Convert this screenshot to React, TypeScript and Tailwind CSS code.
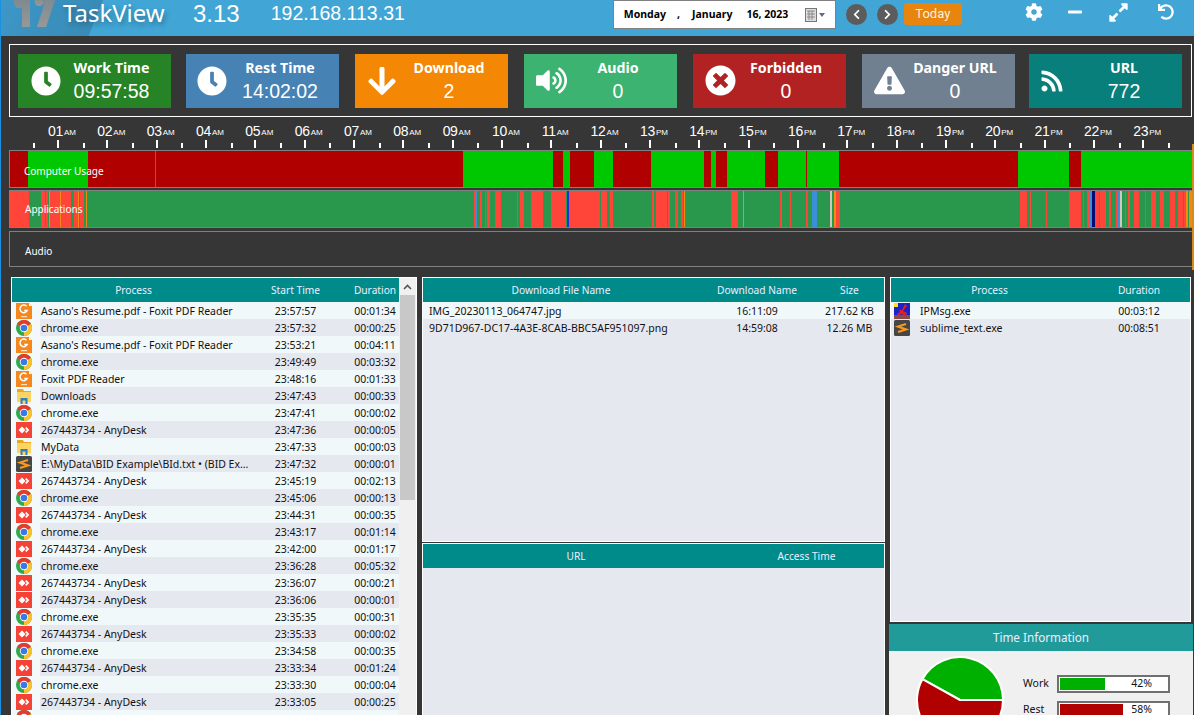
import React from "react";
import {
  FaClock, FaArrowDown, FaVolumeUp, FaTimesCircle, FaExclamationTriangle, FaRss,
  FaCog, FaMinus, FaExpandAlt, FaUndo, FaChevronLeft, FaChevronRight,
} from "react-icons/fa";

const R = "#ff4539", G = "#2a984c", O = "#f08a10", B = "#3a8fd8", N = "#0a0a70", L = "#d0c8c0", U = "#2030e0";
const D = "#b00000", A = "#00c800";

function toSegs(start: number, stops: [number, string][]) {
  let p = start;
  return stops.map(([e, c]) => {
    const s = { w: e - p, c };
    p = e;
    return s;
  });
}

const usage = toSegs(10, [[28, D], [88, A], [155, D], [156, "#4a8a20"], [463, D], [553, A], [563, D], [570, A], [594, D], [613, A], [651, D], [704, A], [711, D], [716, A], [727, D], [765, A], [778, D], [806, A], [807, D], [839, A], [1018, D], [1069, A], [1081, D], [1192, A]]);

const apps = toSegs(10, [[29, R], [41, G], [45, R], [46, G], [48, R], [49, G], [50, O], [52, R], [60, R], [60.5, O], [71, R], [74, G], [78, R], [79, O], [80, G], [84, R], [86, G], [87, O], [474, G], [475, R], [477, B], [480, G], [482, R], [485, G], [486, R], [487, G], [490, R], [491, G], [495, G], [501, R], [503, G], [517, G], [518, R], [520, G], [524, R], [531, G], [543, R], [551, G], [566, R], [567, G], [569, U], [600, R], [601, G], [607, R], [608, G], [610, G], [613, R], [652, G], [654, R], [656, G], [659, R], [667, R], [668, G], [670, R], [675, G], [678, R], [681, G], [683, R], [683.5, G], [685, O], [686, G], [731, G], [738, R], [743, G], [744, O], [780, G], [782, R], [790, G], [791, R], [806, G], [808, R], [812, G], [817, B], [830, G], [832, L], [834, G], [836, O], [840, R], [1020, G], [1027, R], [1030, G], [1031, R], [1046, G], [1047, R], [1069, G], [1081, R], [1083, G], [1084, R], [1087, G], [1090, R], [1092, B], [1095, N], [1099, R], [1100, G], [1106, R], [1109, G], [1111, R], [1116, G], [1118, R], [1120, B], [1122, L], [1125, G], [1126, R], [1128, G], [1130, R], [1134, G], [1139, R], [1140, G], [1145, G], [1146, R], [1151, G], [1156, R], [1160, G], [1164, R], [1170, G], [1175, R], [1178, G], [1183, R], [1184, G], [1186, R], [1188, O], [1189, G], [1192, O]]);

type Kind = "foxit" | "chrome" | "any" | "folder" | "sublime" | "ip";

const rows: [Kind, string, string, string][] = [
  ["foxit", "Asano's Resume.pdf - Foxit PDF Reader", "23:57:57", "00:01:34"],
  ["chrome", "chrome.exe", "23:57:32", "00:00:25"],
  ["foxit", "Asano's Resume.pdf - Foxit PDF Reader", "23:53:21", "00:04:11"],
  ["chrome", "chrome.exe", "23:49:49", "00:03:32"],
  ["foxit", "Foxit PDF Reader", "23:48:16", "00:01:33"],
  ["folder", "Downloads", "23:47:43", "00:00:33"],
  ["chrome", "chrome.exe", "23:47:41", "00:00:02"],
  ["any", "267443734 - AnyDesk", "23:47:36", "00:00:05"],
  ["folder", "MyData", "23:47:33", "00:00:03"],
  ["sublime", "E:\\MyData\\BID Example\\BId.txt • (BID Ex…", "23:47:32", "00:00:01"],
  ["any", "267443734 - AnyDesk", "23:45:19", "00:02:13"],
  ["chrome", "chrome.exe", "23:45:06", "00:00:13"],
  ["any", "267443734 - AnyDesk", "23:44:31", "00:00:35"],
  ["chrome", "chrome.exe", "23:43:17", "00:01:14"],
  ["any", "267443734 - AnyDesk", "23:42:00", "00:01:17"],
  ["chrome", "chrome.exe", "23:36:28", "00:05:32"],
  ["any", "267443734 - AnyDesk", "23:36:07", "00:00:21"],
  ["any", "267443734 - AnyDesk", "23:36:06", "00:00:01"],
  ["chrome", "chrome.exe", "23:35:35", "00:00:31"],
  ["any", "267443734 - AnyDesk", "23:35:33", "00:00:02"],
  ["chrome", "chrome.exe", "23:34:58", "00:00:35"],
  ["any", "267443734 - AnyDesk", "23:33:34", "00:01:24"],
  ["chrome", "chrome.exe", "23:33:30", "00:00:04"],
  ["any", "267443734 - AnyDesk", "23:33:05", "00:00:25"],
];

function RowIcon({ kind }: { kind: Kind }) {
  if (kind === "chrome")
    return (
      <svg width="16" height="16" viewBox="0 0 16 16">
        <circle cx="8" cy="8" r="8" fill="#2fa84f" />
        <path d="M8 8 L1.07 4 A8 8 0 0 1 14.93 4 Z" fill="#e33b2e" />
        <path d="M8 8 L14.93 4 A8 8 0 0 1 8 16 Z" fill="#fbc02d" />
        <circle cx="8" cy="8" r="4.2" fill="#fff" />
        <circle cx="8" cy="8" r="3.3" fill="#3b78e7" />
      </svg>
    );
  if (kind === "any")
    return (
      <svg width="16" height="16" viewBox="0 0 16 16">
        <rect width="16" height="16" fill="#f44336" />
        <path d="M6 4.5 L9.5 8 L6 11.5 L2.5 8 Z" fill="#fff" />
        <path d="M10.3 5 L13.3 8 L10.3 11 L9.1 9.8 L10.9 8 L9.1 6.2 Z" fill="#fff" />
      </svg>
    );
  if (kind === "foxit")
    return (
      <svg width="16" height="16" viewBox="0 0 16 16">
        <path d="M0 0 H13 L16 3 V16 H0 Z" fill="#f5871f" />
        <path d="M13 0 L16 3 H13 Z" fill="#fff" />
        <path d="M10.5 3.2 A3.8 3.8 0 1 0 11.2 7.5 H8.2" fill="none" stroke="#fff" strokeWidth="1.5" />
        <rect x="5" y="13" width="6" height="1.2" fill="#fde0c0" />
      </svg>
    );
  if (kind === "folder")
    return (
      <svg width="16" height="16" viewBox="0 0 16 16">
        <path d="M1 1 H7 L8 3 H15 V5 H1 Z" fill="#e8a820" />
        <rect x="1" y="4" width="14" height="10" fill="#fcd462" />
        <rect x="1" y="14" width="14" height="2" fill="#fbf3d8" />
        <rect x="4.5" y="10" width="7" height="6" fill="#2f7fc4" />
        <rect x="6.5" y="12.5" width="3" height="3.5" fill="#fcd462" />
      </svg>
    );
  if (kind === "sublime")
    return (
      <svg width="16" height="16" viewBox="0 0 16 16">
        <rect width="16" height="16" rx="1.5" fill="#464646" />
        <path d="M12 4 L4 6.5 L12 9.5 L4 12" fill="none" stroke="#f59a1c" strokeWidth="2.2" />
      </svg>
    );
  return (
    <svg width="16" height="16" viewBox="0 0 16 16">
      <rect width="16" height="16" fill="#1a22c8" />
      <rect y="12" width="16" height="4" fill="#8a4a4a" />
      <rect x="0" y="0" width="4" height="4" fill="#ffe020" />
      <path d="M11 1 L13 3 L9 8 L13 10 L12 13 L7 11 L4 13 L3 11 L6 9 L5 7 L8 7 Z" fill="#e02020" />
    </svg>
  );
}

const cards = [
  { t: "Work Time", v: "09:57:58", c: "bg-[#268426]", I: FaClock, s: 30, m: "", ico: "w-[55px]", txt: "w-[77px]" },
  { t: "Rest Time", v: "14:02:02", c: "bg-[#4682b4]", I: FaClock, s: 30, m: "ml-[15px]", ico: "w-[52px]", txt: "w-[84px]" },
  { t: "Download", v: "2", c: "bg-[#f48703]", I: FaArrowDown, s: 32, m: "ml-[16px]", ico: "w-[54px]", txt: "w-[80px]" },
  { t: "Audio", v: "0", c: "bg-[#3cb371]", I: FaVolumeUp, s: 31, m: "ml-[16px]", ico: "w-[54px]", txt: "w-[80px]" },
  { t: "Forbidden", v: "0", c: "bg-[#b22222]", I: FaTimesCircle, s: 31, m: "ml-[16px]", ico: "w-[54px]", txt: "w-[78px]" },
  { t: "Danger URL", v: "0", c: "bg-[#708090]", I: FaExclamationTriangle, s: 31, m: "ml-[16px]", ico: "w-[54px]", txt: "w-[78px]" },
  { t: "URL", v: "772", c: "bg-[#087f7a]", I: FaRss, s: 24, m: "ml-[14px]", ico: "w-[46px]", txt: "w-[98px]" },
];

const hours = Array.from({ length: 23 }, (_, i) => i + 1);

function Bar({ segs, label, cls, lab }: { segs: { w: number; c: string }[]; label: string; cls: string; lab: string }) {
  return (
    <div className={`relative flex border-y border-[#808080] ${cls}`}>
      {segs.map((s, i) => (
        <div key={i} className="h-full shrink-0" style={{ width: s.w, backgroundColor: s.c }} />
      ))}
      <span className={`absolute text-[10px] leading-[12px] text-white ${lab}`}>{label}</span>
    </div>
  );
}

function Head({ cols, children }: { cols: string; children: React.ReactNode }) {
  return <div className={`grid h-[24px] items-center bg-[#008b8b] pt-[1px] text-center text-[10.2px] text-[#eef] ${cols}`}>{children}</div>;
}

const F = "font-['Noto_Sans',sans-serif]";

export default function App() {
  return (
    <div className={`h-[715px] w-[1194px] overflow-hidden border-l border-[#1a90e0] bg-[#363636] ${F}`}>
      {/* top bar */}
      <header className="flex h-[36px] items-center bg-[#41a5d5] pb-[8px] text-white">
        <div className="flex h-[36px] w-[190px] shrink-0 items-start self-start bg-[linear-gradient(112deg,#3d97c7_0%,#388bb6_49.8%,#41a5d5_50%)] pl-[12px]">
          <svg width="44" height="28" viewBox="0 0 44 28" className="shrink-0">
            <defs>
              <linearGradient id="lg" x1="0" y1="0" x2="0" y2="1">
                <stop offset="0" stopColor="#7f8a90" />
                <stop offset="1" stopColor="#989898" />
              </linearGradient>
            </defs>
            <path d="M0 0 H17 V27 H9 L9 8 L3 8 Z" fill="url(#lg)" />
            <circle cx="26" cy="1.5" r="4.5" fill="url(#lg)" />
            <path d="M31 0 H42 L33 27 H24 L30 8 Z" fill="url(#lg)" />
          </svg>
          <span className="ml-[6px] text-[24px] leading-[26px] text-white [text-shadow:2px_3px_5px_rgba(0,0,0,0.3)]">TaskView</span>
        </div>
        <span className="ml-[2px] font-['Liberation_Sans',sans-serif] text-[24px] leading-none">3.13</span>
        <span className="ml-[31px] font-['Liberation_Sans',sans-serif] text-[19.5px] leading-none">192.168.113.31</span>
        <div className="ml-[208px] flex h-[29px] w-[223px] shrink-0 items-center self-start border border-[#808080] bg-white text-[10.5px] font-bold text-black">
          <span className="ml-[10px]">Monday</span>
          <span className="ml-[11px]">,</span>
          <span className="ml-[12px]">January</span>
          <span className="ml-[14px]">16, 2023</span>
          <svg width="20" height="14" viewBox="0 0 20 14" className="ml-[17px]">
            <rect x="0.5" y="0.5" width="11" height="13" fill="#ddd" stroke="#777" />
            <path d="M2 3H10M2 6H10M2 9H10M4 3V12M7 3V12" stroke="#888" />
            <path d="M14 5H20L17 9Z" fill="#5a6a8a" />
          </svg>
        </div>
        <div className="ml-[10px] flex h-[21px] w-[21px] items-center justify-center rounded-full bg-[#5c5c5c]"><FaChevronLeft size={11} /></div>
        <div className="ml-[10px] flex h-[21px] w-[21px] items-center justify-center rounded-full bg-[#5c5c5c]"><FaChevronRight size={11} /></div>
        <div className="ml-[6px] flex h-[22px] w-[58px] items-center justify-center rounded-[3px] bg-[#e8850f] font-['Roboto',sans-serif] text-[13px] text-[#fdf0dd]">Today</div>
        <FaCog size={18} className="mb-[4px] ml-[63px]" />
        <FaMinus size={16} className="mb-[4px] ml-[24px]" />
        <FaExpandAlt size={21} className="mb-[4px] ml-[25px]" />
        <FaUndo size={16} className="mb-[4px] ml-[29px]" />
      </header>

      {/* counters */}
      <section className="ml-[8px] mt-[8px] flex h-[73px] w-[1183px] items-center border border-white pl-[8px]">
        {cards.map((c) => (
          <div key={c.t} className={`flex h-[54px] w-[153px] shrink-0 items-center text-white ${c.c} ${c.m}`}>
            <div className={`flex shrink-0 justify-center ${c.ico}`}><c.I size={c.s} /></div>
            <div className={`flex shrink-0 flex-col items-center ${c.txt}`}>
              <span className="whitespace-nowrap text-[14.2px] font-bold leading-[20px]">{c.t}</span>
              <span className="font-['Liberation_Sans',sans-serif] text-[19.5px] leading-[26px]">{c.v}</span>
            </div>
          </div>
        ))}
      </section>

      {/* timeline */}
      <section className="relative mt-[1px]">
        <div className="ml-[32.33px] flex h-[32px] pb-[2px] text-white">
          {hours.map((h) => (
            <div key={h} className="flex w-[49.33px] shrink-0 flex-col">
              <div className="flex h-[20px] items-end justify-center pl-[8px] font-['Liberation_Sans',sans-serif] leading-none">
                <span className="text-[14px] tracking-[-0.3px]">{String(h).padStart(2, "0")}</span>
                <span className="ml-[1px] text-[8px] leading-[10px]">{h < 13 ? "AM" : "PM"}</span>
              </div>
              <div className="flex h-[10px] items-end">
                <div className="flex-1"><div className="h-[5px] w-[2px] bg-white" /></div>
                <div className="h-[8px] w-[2px] bg-white" />
                <div className="flex-1" />
              </div>
            </div>
          ))}
          <div className="flex h-[30px] items-end"><div className="h-[5px] w-[2px] bg-white" /></div>
        </div>
        <div className="ml-[8px] flex w-[1184px] flex-col">
          <Bar segs={usage} label="Computer Usage" lab="left-[14px] top-[14px]" cls="mb-[2px] h-[38px] border-l border-l-[#808080]" />
          <Bar segs={apps} label="Applications" lab="left-[15px] top-[12px]" cls="mb-[3px] h-[38px] border-l border-l-[#808080]" />
          <Bar segs={[]} label="Audio" lab="left-[15px] top-[13px]" cls="h-[36px] border-l border-l-[#808080]" />
        </div>
        <div className="absolute right-0 top-[26px] h-[126px] w-[2px] bg-[#d98a1c]" />
      </section>

      {/* tables */}
      <section className="ml-[10px] mt-[10px] flex h-[438px] items-start text-[10.5px] text-[#111]">
        {/* process list */}
        <div className="flex h-[440px] w-[406px] shrink-0 overflow-hidden border border-white bg-[#f0f0f0]">
          <div className="w-[387px] shrink-0">
            <Head cols="grid-cols-[243px_81px_15px_48px]">
              <span>Process</span>
              <span>Start Time</span>
              <span />
              <span>Duration</span>
            </Head>
            {rows.map((r, i) => (
              <div key={i} className="grid h-[17px] grid-cols-[28px_359px] items-center bg-[#f0f8fa]">
                <div className="flex h-[17px] items-center bg-[#f3f9fb] pl-[4px]"><RowIcon kind={r[0]} /></div>
                <div className={`grid h-[17px] grid-cols-[215px_81px_15px_48px] items-center pt-[2px] ${i % 2 ? "bg-[#e6e8f0]" : "bg-[#f0f8fa]"}`}>
                  <span className="whitespace-nowrap pl-[1px]">{r[1]}</span>
                  <span className="text-center">{r[2]}</span>
                  <span />
                  <span className="text-center">{r[3]}</span>
                </div>
              </div>
            ))}
            <div className="grid h-[17px] grid-cols-[28px_359px] items-start bg-[#f0f8fa]">
              <div className="pl-[4px]"><RowIcon kind="chrome" /></div>
            </div>
          </div>
          <div className="flex w-[17px] shrink-0 flex-col bg-[#f0f0f0]">
            <div className="flex h-[17px] items-center justify-center">
              <svg width="9" height="6" viewBox="0 0 9 6"><path d="M1 5 L4.5 1.5 L8 5" fill="none" stroke="#555" strokeWidth="1.6" /></svg>
            </div>
            <div className="mx-[1px] h-[205px] bg-[#c8c8c8]" />
          </div>
        </div>

        {/* middle */}
        <div className="ml-[5px] flex w-[463px] shrink-0 flex-col">
          <div className="h-[265px] border border-white bg-[#e6e8f0]">
            <Head cols="grid-cols-[276px_116px_69px]">
              <span>Download File Name</span>
              <span>Download Name</span>
              <span>Size</span>
            </Head>
            <div className="grid h-[17px] grid-cols-[276px_116px_69px] items-center bg-[#f0f8fa] pt-[2px]">
              <span className="pl-[6px]">IMG_20230113_064747.jpg</span>
              <span className="text-center">16:11:09</span>
              <span className="text-center">217.62 KB</span>
            </div>
            <div className="grid h-[17px] grid-cols-[276px_116px_69px] items-center pt-[2px]">
              <span className="pl-[6px]">9D71D967-DC17-4A3E-8CAB-BBC5AF951097.png</span>
              <span className="text-center">14:59:08</span>
              <span className="text-center">12.26 MB</span>
            </div>
          </div>
          <div className="mt-[1px] h-[175px] border border-white bg-[#e6e8f0]">
            <Head cols="grid-cols-[306px_155px]">
              <span>URL</span>
              <span>Access Time</span>
            </Head>
          </div>
        </div>

        {/* right */}
        <div className="ml-[4px] flex w-[304px] shrink-0 flex-col">
          <div className="ml-[1px] h-[345px] w-[301px] border border-white bg-[#e6e8f0]">
            <Head cols="grid-cols-[197px_102px]">
              <span>Process</span>
              <span>Duration</span>
            </Head>
            <div className="grid h-[17px] grid-cols-[29px_168px_102px] items-center bg-[#f0f8fa]">
              <div className="pl-[3px]"><RowIcon kind="ip" /></div>
              <span className="pt-[2px]">IPMsg.exe</span>
              <span className="pt-[2px] text-center">00:03:12</span>
            </div>
            <div className="grid h-[17px] grid-cols-[29px_168px_102px] items-center">
              <div className="pl-[3px]"><RowIcon kind="sublime" /></div>
              <span className="pt-[2px]">sublime_text.exe</span>
              <span className="pt-[2px] text-center">00:08:51</span>
            </div>
          </div>
          <div className="mt-[2px] flex h-[27px] items-center justify-center bg-[#219a9a] pt-[1px] text-[11.7px] text-[#eef]">Time Information</div>
          <div className="flex h-[80px] items-start bg-[#f0f0f0]">
            <svg width="90" height="90" viewBox="0 0 90 90" className="ml-[26px] mt-[4px] shrink-0">
              <path d="M45 45 L88 45 A43 43 0 0 0 7.4 24.2 Z" fill="#00b000" stroke="#fff" strokeWidth="2" />
              <path d="M45 45 L7.4 24.2 A43 43 0 1 0 88 45 Z" fill="#b00000" stroke="#fff" strokeWidth="2" />
            </svg>
            <div className="ml-[18px] mt-[24px] flex flex-col gap-[8px]">
              <div className="flex items-center">
                <span className="w-[34px]">Work</span>
                <div className="relative flex h-[18px] w-[113px] items-center border-2 border-[#707070] bg-white p-[1px]">
                  <div className="h-full w-[45px] bg-[#00b000]" />
                  <span className="absolute right-[16px]">42%</span>
                </div>
              </div>
              <div className="flex items-center">
                <span className="w-[34px]">Rest</span>
                <div className="relative flex h-[18px] w-[113px] items-center border-2 border-[#707070] bg-white p-[1px]">
                  <div className="h-full w-[63px] bg-[#b00000]" />
                  <span className="absolute right-[16px]">58%</span>
                </div>
              </div>
            </div>
          </div>
        </div>
      </section>
    </div>
  );
}
